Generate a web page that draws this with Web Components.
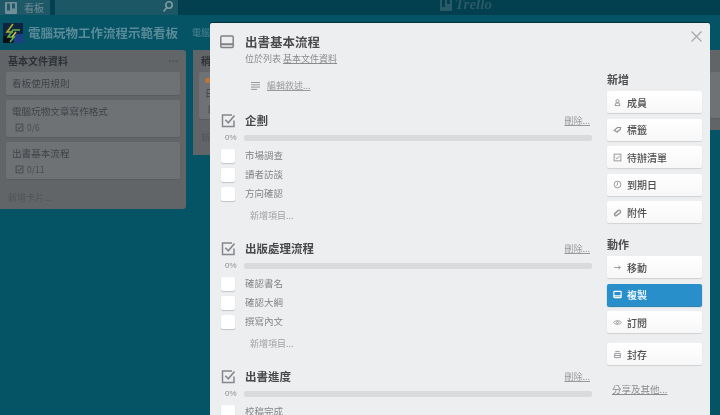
<!DOCTYPE html>
<html lang="zh-Hant">
<head>
<meta charset="utf-8">
<title>Trello</title>
<style>
  html, body { margin: 0; height: 415px; overflow: hidden; background: #045465; }
  body { font-family: "Noto Sans CJK TC", "Noto Sans", sans-serif; position: relative; }
</style>
</head>
<body>
<board-page>
  <board-list title="基本文件資料" height="159">
    <board-card name="看板使用規則"></board-card>
    <board-card name="電腦玩物文章寫作格式" count="0/6"></board-card>
    <board-card name="出書基本流程" count="0/11"></board-card>
  </board-list>
  <board-list title="稍" height="105" style="margin-left:7px">
    <board-card name="日" count="0" label></board-card>
  </board-list>
  <board-list bare height="80" style="margin-left:331px">
    <board-card style="height:46px"></board-card>
  </board-list>
</board-page>

<card-modal title="出書基本流程" list="基本文件資料">
  <check-list slot="main" title="企劃" items="市場調查,讀者訪談,方向確認"></check-list>
  <check-list slot="main" title="出版處理流程" items="確認書名,確認大綱,撰寫內文"></check-list>
  <check-list slot="main" title="出書進度" items="校稿完成"></check-list>

  <h3 slot="side" class="side-head">新增</h3>
  <side-button slot="side" icon="member">成員</side-button>
  <side-button slot="side" icon="label">標籤</side-button>
  <side-button slot="side" icon="check">待辦清單</side-button>
  <side-button slot="side" icon="clock">到期日</side-button>
  <side-button slot="side" icon="clip">附件</side-button>
  <h3 slot="side" class="side-head" style="margin-top:13px">動作</h3>
  <side-button slot="side" icon="arrow">移動</side-button>
  <side-button slot="side" icon="card" active>複製</side-button>
  <side-button slot="side" icon="eye">訂閱</side-button>
  <side-button slot="side" icon="archive" style="margin-top:10px">封存</side-button>
  <a slot="side" class="side-link">分享及其他...</a>
</card-modal>

<style>
  .side-head { margin: 0 0 4px; height: 16px; line-height: 16px; font-size: 11px; font-weight: 700; color: #4d4d4d; }
  .side-link { display: block; margin: 17px 0 0 5px; font-size: 9.5px; line-height: 14px; color: #8c8c8c; text-decoration: underline; }
</style>

<script>
const ICONS = {
  member: '<circle cx="8" cy="5.5" r="2.8"/><path d="M3.5 13.5h9L11 9H5z"/>',
  label: '<path d="M2 9.5 8 4.5h5.5l-.5 3.5-5.5 4.5z" stroke-width="2"/>',
  check: '<rect x="2" y="2" width="12" height="12"/><path d="M4.8 8l2.3 2.3L11.8 5"/>',
  clock: '<circle cx="8" cy="8" r="6"/><path d="M8 4.2V8.2L5.8 9.8"/>',
  clip: '<path d="M3 10.5 9 4.5a2.7 2.7 0 0 1 3.8 3.8L7 13a2.4 2.4 0 0 1-3.6-3.2l5-4.8" stroke-width="2.4"/>',
  arrow: '<path d="M2 8h11M9.5 4.8 13 8l-3.5 3.2"/>',
  card: '<rect x="1.5" y="2.5" width="13" height="11" rx="1" stroke-width="2"/><path d="M1.5 10.5h13" stroke-width="2.4"/>',
  eye: '<path d="M1 8C4 3.8 12 3.8 15 8 12 12.2 4 12.2 1 8z"/><circle cx="8" cy="8" r="1.8"/>',
  archive: '<path d="M4 2.5h8M3 6h10v7.5H3zM3 9.7h10"/>',
};

class BoardPage extends HTMLElement {
  constructor() {
    super();
    this.attachShadow({ mode: 'open' }).innerHTML = `
      <style>
        :host { display: block; height: 415px; overflow: hidden; background: #045465; color: #32383b; filter: blur(.35px); }
        header { display: flex; align-items: center; gap: 5px; height: 15px; background: #03404f; overflow: hidden; }
        .btn { width: 50px; height: 15px; display: flex; align-items: center; gap: 7px; padding-left: 5px; box-sizing: border-box; background: #1f5968; color: #6f8e97; font-size: 10px; }
        .search { width: 123px; height: 15px; display: flex; justify-content: flex-end; align-items: center; padding-right: 4px; box-sizing: border-box; background: #1b5765; }
        .logo { margin-left: 257px; display: flex; align-items: center; gap: 3px; height: 12px; margin-top: -6px; color: #2b5a67; font: italic 700 15px "Liberation Serif", serif; }
        .title { display: flex; align-items: center; height: 35px; padding-left: 3px; }
        .title .mark { width: 20px; height: 20px; flex: none; }
        .title b { margin-left: 5px; font-size: 12.5px; line-height: 20px; color: #5b8a99; font-weight: 700; }
        .title span { margin-left: 14px; font-size: 9px; color: #4f8392; white-space: nowrap; }
        .lists { display: flex; align-items: flex-start; }
      </style>
      <header>
        <div class="btn">
          <svg width="12" height="12" viewBox="0 0 12 12"><rect width="12" height="12" rx="1" fill="#6f8e97"/><rect x="2" y="1.5" width="3" height="7" fill="#1f5968"/><rect x="7" y="1.5" width="3" height="5" fill="#1f5968"/></svg>
          <span>看板</span>
        </div>
        <div class="search">
          <svg width="12" height="14" viewBox="0 0 12 14" fill="none" stroke="#7f9aa2" stroke-width="1.6"><circle cx="7" cy="4" r="3.2"/><path d="M4.8 6.6 1.5 10.5"/></svg>
        </div>
        <div class="logo">
          <svg width="12" height="12" viewBox="0 0 12 12"><rect width="12" height="12" rx="1" fill="#2b5a67"/><rect x="2" width="3" height="8" fill="#03404f"/><rect x="7" width="3" height="5" fill="#03404f"/></svg>
          <span>Trello</span>
        </div>
      </header>
      <div class="title">
        <svg class="mark" viewBox="0 0 20 20">
          <rect width="20" height="20" fill="#10233f"/>
          <rect x="11" y="11" width="9" height="9" fill="#1c3f86"/>
          <rect y="13" width="8" height="7" fill="#0b0f14"/>
          <path d="M10 1 4 9h6" fill="none" stroke="#a9b02f" stroke-width="1.6"/>
          <path d="M17 7h-7l-5 7h6l-4 5" fill="none" stroke="#5fb04a" stroke-width="1.6"/>
          <path d="M13 9l-4 5" stroke="#d8c23a" stroke-width="1.4"/>
        </svg>
        <b>電腦玩物工作流程示範看板</b>
        <span>電腦玩物</span>
      </div>
      <div class="lists"><slot></slot></div>
    `;
  }
}

class BoardList extends HTMLElement {
  constructor() {
    super();
    this.shadow = this.attachShadow({ mode: 'open' });
  }
  connectedCallback() {
    const bare = this.hasAttribute('bare');
    this.shadow.innerHTML = `
      <style>
        :host { display: block; flex: none; width: 186px; height: ${this.getAttribute('height')}px; box-sizing: border-box; padding: ${bare ? '22px 0 0' : '0 6px'}; background: #616568; border-radius: 0 3px 3px 0; color: #33373a; }
        h2 { margin: 0; height: 22px; padding: 3px 2px 0; box-sizing: border-box; display: flex; justify-content: space-between; font-size: 10px; line-height: 16px; font-weight: 700; color: #2d3136; }
        h2 i { font-style: normal; color: #505457; font-size: 10px; line-height: 10px; }
        .add { margin-top: 12px; padding-left: 2px; font-size: 9px; line-height: 14px; color: #505457; }
        .cards { display: flex; flex-direction: column; gap: 5px; }
      </style>
      ${bare ? '' : `<h2>${this.getAttribute('title')}<i>...</i></h2>`}
      <div class="cards"><slot></slot></div>
      ${bare ? '' : '<div class="add">新增卡片...</div>'}
    `;
  }
}

class BoardCard extends HTMLElement {
  constructor() {
    super();
    this.shadow = this.attachShadow({ mode: 'open' });
  }
  connectedCallback() {
    const count = this.getAttribute('count');
    const name = this.getAttribute('name');
    this.shadow.innerHTML = `
      <style>
        :host { display: block; box-sizing: border-box; min-height: 23px; padding: 4px 6px; background: #6f7275; border-radius: 2px; box-shadow: 0 1px 0 #595d60; color: #3f4346; font-size: 9.6px; line-height: 15px; }
        .label { width: 7px; height: 5px; margin: 2px 0 3px; background: #b8763a; border-radius: 2px; }
        .meta { display: flex; align-items: center; gap: 3px; margin-top: 3px; font-size: 8.5px; color: #484c4f; line-height: 11px; padding-left: 3px; }
      </style>
      ${this.hasAttribute('label') ? '<div class="label"></div>' : ''}
      ${name ? `<div>${name}</div>` : ''}
      ${count ? `<div class="meta">
        <svg width="9" height="9" viewBox="0 0 16 16" fill="none" stroke="#484c4f" stroke-width="1.8">${ICONS.check}</svg>
        <span>${count}</span>
      </div>` : ''}
    `;
  }
}

class CardModal extends HTMLElement {
  constructor() {
    super();
    this.shadow = this.attachShadow({ mode: 'open' });
  }
  connectedCallback() {
    this.shadow.innerHTML = `
      <style>
        :host { display: block; position: absolute; left: 210px; top: 23px; width: 500px; height: 392px; overflow: hidden; box-sizing: border-box; background: #edeef0; border-radius: 2px 2px 0 0; box-shadow: 0 -1px 0 #02303c; color: #4d4d4d; filter: blur(.35px); }
        .grid { display: grid; grid-template-columns: 397px 95px; padding-top: 9px; }
        .head { display: grid; grid-template-columns: 25px 1fr; padding-left: 10px; height: 33px; }
        .head svg { margin-top: 3px; }
        h1 { margin: 0; height: 20px; font-size: 12.5px; line-height: 20px; font-weight: 700; color: #4a4a4a; }
        .in { height: 13px; font-size: 9px; line-height: 13px; color: #8c8c8c; white-space: nowrap; }
        .desc { display: flex; align-items: center; gap: 5px; height: 14px; margin: 14px 0 0 41px; font-size: 9px; line-height: 14px; color: #9a9a9a; }
        .desc span { text-decoration: underline; margin-left: 2px; }
        .checks { margin-top: 17px; display: flex; flex-direction: column; gap: 11px; }
        .side { padding-top: 39px; }
        .close { position: absolute; right: 8px; top: 8px; }
      </style>
      <svg class="close" width="11" height="11" viewBox="0 0 11 11" stroke="#a4a6a8" stroke-width="1.2"><path d="M.5.5l10 10M10.5.5l-10 10"/></svg>
      <div class="grid">
        <div>
          <div class="head">
            <svg width="14" height="14" viewBox="0 0 14 14" fill="none" stroke="#7f8285" stroke-width="1.5"><rect x=".8" y="1" width="12.4" height="11.5" rx="1"/><path d="M.8 9.3h12.4" stroke-width="2"/></svg>
            <div>
              <h1>${this.getAttribute('title')}</h1>
              <div class="in">位於列表 <u>${this.getAttribute('list')}</u></div>
            </div>
          </div>
          <div class="desc">
            <svg width="9" height="8" viewBox="0 0 9 8" stroke="#9a9a9a" stroke-width="1"><path d="M0 .5h9M0 2.8h9M0 5.1h9M0 7.4h6"/></svg>
            <span>編輯敘述...</span>
          </div>
          <div class="checks"><slot name="main"></slot></div>
        </div>
        <div class="side"><slot name="side"></slot></div>
      </div>
    `;
  }
}

class CheckList extends HTMLElement {
  constructor() {
    super();
    this.shadow = this.attachShadow({ mode: 'open' });
  }
  connectedCallback() {
    const items = this.getAttribute('items').split(',');
    this.shadow.innerHTML = `
      <style>
        :host { display: block; padding-left: 11px; font-size: 9.5px; color: #858585; }
        .top { display: grid; grid-template-columns: 24px 1fr auto; align-items: center; height: 20px; padding-right: 17px; }
        .top b { font-size: 11.5px; line-height: 20px; color: #4a4a4a; font-weight: 700; }
        .top a { font-size: 9px; color: #9a9a9a; text-decoration: underline; }
        .prog { display: grid; grid-template-columns: 23px 348px; align-items: center; height: 14px; margin-top: 1px; font: 8px/14px "Liberation Sans", sans-serif; color: #8f8f8f; }
        .prog span { padding-left: 4px; }
        .bar { height: 6px; background: #d8dadc; border-radius: 2px; }
        .item { display: grid; grid-template-columns: 24px 1fr; align-items: center; height: 19px; line-height: 19px; }
        .box { width: 14px; height: 14px; background: #fff; border-radius: 2px; box-shadow: 0 1px 1px #c2c4c6; }
        .items { margin-top: 1px; }
        .add { margin: 2px 0 0 29px; height: 22px; line-height: 22px; font-size: 9px; color: #a2a2a2; }
      </style>
      <div class="top">
        <svg width="15" height="15" viewBox="0 0 15 15" fill="none" stroke="#85888b" stroke-width="1.5"><path d="M13 7.5v6H1.5V2H11"/><path d="M4.3 6.8l3 3L13.5 2.5" stroke-width="1.6"/></svg>
        <b>${this.getAttribute('title')}</b>
        <a>刪除...</a>
      </div>
      <div class="prog"><span>0%</span><div class="bar"></div></div>
      <div class="items">
        ${items.map((t) => `<div class="item"><span class="box"></span><span>${t}</span></div>`).join('')}
      </div>
      <div class="add">新增項目...</div>
    `;
  }
}

class SideButton extends HTMLElement {
  constructor() {
    super();
    this.shadow = this.attachShadow({ mode: 'open' });
  }
  connectedCallback() {
    const active = this.hasAttribute('active');
    this.shadow.innerHTML = `
      <style>
        :host { display: block; margin-bottom: 5.5px; }
        .b { display: flex; align-items: center; gap: 5px; height: 22px; padding-left: 6px; box-sizing: border-box; border-radius: 2px; font-size: 10px; font-weight: 500;
             background: ${active ? '#298fca' : 'linear-gradient(#fff, #f7f7f8)'}; color: ${active ? '#fff' : '#4d4d4d'}; box-shadow: 0 1px 1px ${active ? '#1f77a8' : '#cfd1d3'}; }
      </style>
      <div class="b">
        <svg width="9" height="9" viewBox="0 0 16 16" fill="none" stroke="${active ? '#fff' : '#8f9295'}" stroke-width="1.6">${ICONS[this.getAttribute('icon')]}</svg>
        <slot></slot>
      </div>
    `;
  }
}

customElements.define('board-page', BoardPage);
customElements.define('board-list', BoardList);
customElements.define('board-card', BoardCard);
customElements.define('card-modal', CardModal);
customElements.define('check-list', CheckList);
customElements.define('side-button', SideButton);
</script>
</body>
</html>
